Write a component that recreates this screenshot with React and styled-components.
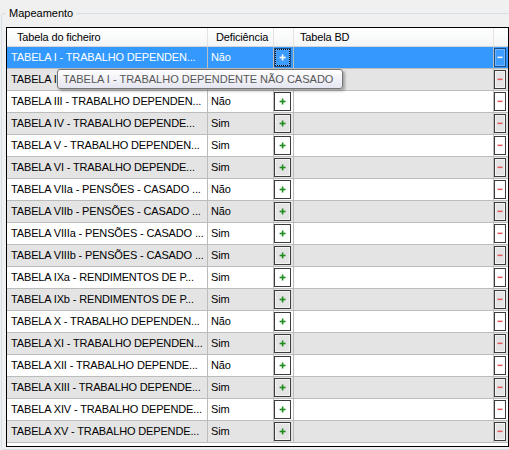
import React from "react";
import styled, { createGlobalStyle } from "styled-components";

const GlobalStyle = createGlobalStyle`
  html, body {
    margin: 0;
    padding: 0;
    background: #f0f0f0;
  }
  body {
    width: 509px;
    height: 450px;
    overflow: hidden;
    font-family: "Liberation Sans", Arial, sans-serif;
    font-size: 11px;
    color: #000;
  }
`;

const COLUMNS = "201px 66px 20px 200px 14px";

const Group = styled.fieldset`
  margin: 7px 0 0 1px;
  padding: 7px 0 2px 4px;
  width: 520px;
  border: 1px solid #d5dfe5;
  border-radius: 3px;
  min-width: 0;
`;

const Legend = styled.legend`
  padding: 0 3px;
  margin: 0;
  line-height: 13px;
  font-size: 11px;
  color: #000;
`;

const Grid = styled.div`
  position: relative;
  box-sizing: border-box;
  width: 503px;
  height: 420px;
  border: 1px solid #000;
  background: #fff;
  overflow: hidden;
`;

const Header = styled.div`
  display: grid;
  grid-template-columns: ${COLUMNS};
  box-sizing: border-box;
  height: 19px;
  border-bottom: 1px solid #d5d5d5;
  background: linear-gradient(#ffffff, #f4f5f7);
`;

const HeaderCell = styled.div`
  padding-left: ${(p) => p.$pad || 0}px;
  border-right: ${(p) => (p.$last ? "none" : "1px solid #e3e3e3")};
  line-height: 18px;
  white-space: nowrap;
  overflow: hidden;
  letter-spacing: -0.15px;
`;

const Row = styled.div`
  display: grid;
  grid-template-columns: ${COLUMNS};
  height: 22px;
  box-sizing: border-box;
  border-bottom: 1px solid #bcbcbc;
  background: ${(p) => (p.$selected ? "#3399ff" : p.$alt ? "#e4e4e4" : "#ffffff")};
  color: ${(p) => (p.$selected ? "#fff" : "#000")};
`;

const Cell = styled.div`
  padding-left: ${(p) => p.$pad || 0}px;
  border-right: ${(p) => (p.$last ? "none" : "1px solid #bcbcbc")};
  line-height: 21px;
  white-space: nowrap;
  overflow: hidden;
  letter-spacing: -0.15px;
`;

const ButtonCell = styled.div`
  display: flex;
  align-items: flex-start;
  padding-top: 1px;
  border-right: ${(p) => (p.$last ? "none" : "1px solid #bcbcbc")};
`;

const BoxButton = styled.div`
  box-sizing: border-box;
  width: ${(p) => p.$w}px;
  height: 19px;
  display: flex;
  align-items: center;
  justify-content: center;
  border: 1px solid ${(p) => (p.$selected ? "#1d4d86" : "#3c3c3c")};
  box-shadow: inset 0 0 0 1px
    ${(p) => (p.$selected ? "rgba(255,255,255,0.25)" : "rgba(255,255,255,0.55)")};
  background: ${(p) => (p.$selected ? "#3d9cff" : "transparent")};
`;

const Focus = styled.div`
  box-sizing: border-box;
  width: 13px;
  height: 15px;
  display: flex;
  align-items: center;
  justify-content: center;
  outline: 1px dotted #0a0a0a;
`;

const Tooltip = styled.div`
  position: absolute;
  left: 50px;
  top: 41px;
  box-sizing: border-box;
  width: 286px;
  height: 20px;
  padding-left: 5px;
  border: 1px solid #767676;
  border-radius: 3px;
  background: linear-gradient(#ffffff, #e4e5f0);
  box-shadow: 2px 2px 3px rgba(0, 0, 0, 0.3);
  color: #575757;
  line-height: 18px;
  font-size: 11px;
  white-space: nowrap;
`;

const Plus = ({ color }) => (
  <svg width="7" height="7" viewBox="0 0 7 7">
    <rect x="2.8" y="0.5" width="1.6" height="6" fill={color} />
    <rect x="0.6" y="2.7" width="6" height="1.6" fill={color} />
  </svg>
);

const Minus = ({ color }) => (
  <svg width="6" height="3" viewBox="0 0 6 3">
    <rect x="0.5" y="0.6" width="5" height="1.5" fill={color} />
  </svg>
);

// second row's deficiency value sits under the tooltip in the screenshot
const rows = [
  ["TABELA I - TRABALHO DEPENDEN...", "Não"],
  ["TABELA II - TRABALHO DEPENDEN...", ""],
  ["TABELA III - TRABALHO DEPENDEN...", "Não"],
  ["TABELA IV - TRABALHO DEPENDE...", "Sim"],
  ["TABELA V - TRABALHO DEPENDEN...", "Sim"],
  ["TABELA VI - TRABALHO DEPENDE...", "Sim"],
  ["TABELA VIIa - PENSÕES - CASADO ...", "Não"],
  ["TABELA VIIb - PENSÕES - CASADO ...", "Não"],
  ["TABELA VIIIa - PENSÕES - CASADO ...", "Sim"],
  ["TABELA VIIIb - PENSÕES - CASADO ...", "Sim"],
  ["TABELA IXa - RENDIMENTOS DE P...", "Sim"],
  ["TABELA IXb - RENDIMENTOS DE P...", "Sim"],
  ["TABELA X - TRABALHO DEPENDEN...", "Não"],
  ["TABELA XI - TRABALHO DEPENDEN...", "Sim"],
  ["TABELA XII - TRABALHO DEPENDE...", "Não"],
  ["TABELA XIII - TRABALHO DEPENDE...", "Sim"],
  ["TABELA XIV - TRABALHO DEPENDE...", "Sim"],
  ["TABELA XV - TRABALHO DEPENDE...", "Sim"],
];

const App = () => {
  const selected = 0;

  return (
    <>
      <GlobalStyle />
      <Group>
        <Legend>Mapeamento</Legend>
        <Grid>
          <Header>
            <HeaderCell $pad={10}>Tabela do ficheiro</HeaderCell>
            <HeaderCell $pad={8}>Deficiência</HeaderCell>
            <HeaderCell />
            <HeaderCell $pad={6}>Tabela BD</HeaderCell>
            <HeaderCell $last />
          </Header>
          {rows.map(([name, def], i) => {
            const sel = i === selected;
            return (
              <Row key={name} $selected={sel} $alt={i % 2 === 1}>
                <Cell $pad={4}>{name}</Cell>
                <Cell $pad={3}>{def}</Cell>
                <ButtonCell>
                  <BoxButton $w={17} $selected={sel}>
                    {sel ? (
                      <Focus>
                        <Plus color="#ffffff" />
                      </Focus>
                    ) : (
                      <Plus color="#1e8c1e" />
                    )}
                  </BoxButton>
                </ButtonCell>
                <Cell />
                <ButtonCell $last>
                  <BoxButton $w={12} $selected={sel}>
                    <Minus color={sel ? "#ffffff" : "#e05a5a"} />
                  </BoxButton>
                </ButtonCell>
              </Row>
            );
          })}
          <Tooltip>TABELA I - TRABALHO DEPENDENTE NÃO CASADO</Tooltip>
        </Grid>
      </Group>
    </>
  );
};

export default App;
